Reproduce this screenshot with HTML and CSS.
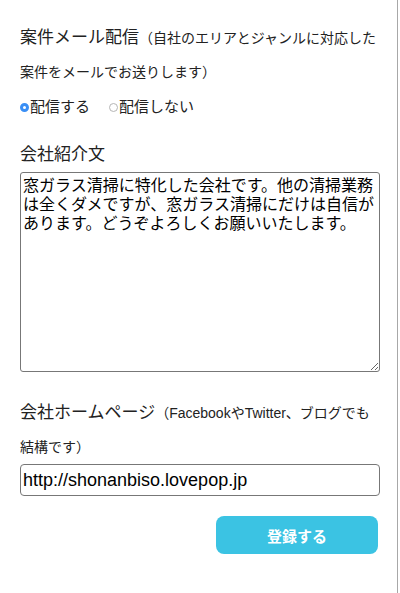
FILE: index.html
```html
<!DOCTYPE html>
<html lang="ja">

<head>
    <meta charset="utf-8">
    <title>会社情報</title>
    <link rel="stylesheet" href="styles.css">
</head>

<body>
    <div class="panel">
        <form class="profile-form" action="">
            <div class="field-title">案件メール配信<span class="note">（自社のエリアとジャンルに対応した<br>案件をメールでお送りします）</span></div>
            <div class="radios">
                <label class="radio"><input type="radio" name="mail" checked>配信する</label>
                <label class="radio"><input type="radio" name="mail">配信しない</label>
            </div>

            <div class="field-title">会社紹介文</div>
            <textarea class="intro">窓ガラス清掃に特化した会社です。他の清掃業務は全くダメですが、窓ガラス清掃にだけは自信があります。どうぞよろしくお願いいたします。</textarea>

            <div class="field-title homepage">会社ホームページ<span class="note">（FacebookやTwitter、ブログでも<br>結構です）</span></div>
            <input class="url" type="text" value="http://shonanbiso.lovepop.jp">

            <div class="actions">
                <button type="button" class="submit">登録する</button>
            </div>
        </form>
    </div>
</body>

</html>
```

FILE: styles.css
```css
body {
    margin: 0;
    font-family: "Liberation Sans", "Noto Sans CJK JP", sans-serif;
    color: #222;
    background: #fff;
}

.panel {
    width: 398px;
    height: 593px;
    border-right: 1px solid #a8a8a8;
    box-sizing: border-box;
}

.profile-form {
    padding: 21px 19px 0 20px;
}

.field-title {
    font-size: 17px;
    line-height: 34px;
}

.note {
    font-size: 14px;
    line-height: 1;
}

.homepage {
    margin-top: 24px;
}

.radios {
    display: flex;
    gap: 19px;
    margin: 8px 0 21px;
    height: 20px;
    align-items: center;
}

.radio {
    display: flex;
    align-items: center;
    font-size: 15px;
    line-height: 20px;
}

.radio input {
    appearance: none;
    -webkit-appearance: none;
    width: 9px;
    height: 9px;
    margin: 0 1px 0 0;
    border: 1px solid #b5b5b5;
    border-radius: 50%;
    box-sizing: border-box;
    background: #fff;
}

.radio input:checked {
    border: 3px solid #3a8ff5;
    background: #fff;
}

.intro {
    display: block;
    width: 360px;
    height: 200px;
    margin: 0;
    padding: 2px;
    box-sizing: border-box;
    border: 1px solid #777;
    border-radius: 3px;
    font-family: "Noto Sans CJK JP", sans-serif;
    font-size: 16px;
    line-height: 19px;
    color: #000;
    resize: vertical;
}

.url {
    display: block;
    width: 360px;
    height: 32px;
    margin: 0;
    padding: 0 2px;
    box-sizing: border-box;
    border: 1px solid #777;
    border-radius: 4px;
    font-family: "Liberation Sans", Arial, sans-serif;
    font-size: 18px;
    color: #000;
}

.actions {
    display: flex;
    justify-content: flex-end;
    margin-top: 20px;
}

.submit {
    width: 162px;
    height: 38px;
    border: none;
    border-radius: 8px;
    background: #3bc3e3;
    color: #fff;
    font-family: "Noto Sans CJK JP", sans-serif;
    font-size: 15px;
    font-weight: bold;
}
```
